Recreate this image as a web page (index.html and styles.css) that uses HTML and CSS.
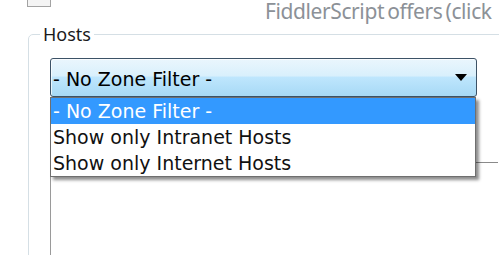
FILE: index.html
```html
<!DOCTYPE html>
<html lang="en">
<head>
    <meta charset="UTF-8">
    <title>Hosts</title>
    <link rel="stylesheet" href="styles.css">
</head>
<body>
    <div class="topbar">
        <div class="check"></div>
        <div class="hint">FiddlerScript offers (click</div>
    </div>
    <fieldset class="group">
        <legend>Hosts</legend>
        <div class="select">
            <div class="combo">
                <span>- No Zone Filter -</span>
                <svg class="arrow" width="12" height="7" viewBox="0 0 12 7"><path d="M0 0H12L6 7Z" fill="#000"/></svg>
            </div>
            <div class="popup">
                <div class="item selected">- No Zone Filter -</div>
                <div class="item">Show only Intranet Hosts</div>
                <div class="item">Show only Internet Hosts</div>
            </div>
        </div>
        <div class="panel"></div>
    </fieldset>
</body>
</html>
```
FILE: styles.css
```css
html, body {
    overflow: hidden;
}
body {
    margin: 0;
    width: 499px;
    height: 255px;
    background: #fff;
    font-family: "DejaVu Sans", sans-serif;
}
.topbar {
    display: flex;
    height: 24px;
    align-items: flex-start;
}
.check {
    flex: none;
    width: 22px;
    height: 20px;
    margin-top: -15px;
    margin-left: 27px;
    border: 1px solid #a3a3a3;
    background: #f4f4f4;
}
.hint {
    margin-left: 214px;
    margin-top: -3px;
    font-family: "Noto Sans", sans-serif;
    font-size: 21px;
    letter-spacing: -0.4px;
    word-spacing: -2px;
    color: #8c9197;
    white-space: nowrap;
}
.group {
    margin: 0 -60px 0 28px;
    padding: 0 0 0 21px;
    height: 300px;
    border: 1px solid #d5dfe5;
    border-radius: 5px;
}
.group legend {
    margin-left: -10px;
    padding: 0 3px;
    font-family: "Noto Sans", sans-serif;
    font-size: 18px;
    line-height: 20px;
    color: #1b1b1b;
}
.select {
    position: relative;
    width: 427px;
    margin-top: 14px;
}
.combo {
    display: flex;
    align-items: center;
    justify-content: space-between;
    height: 35px;
    padding: 2px 9px 0 2px;
    border: 1px solid #3c5266;
    border-radius: 3px;
    background: linear-gradient(#eaf6fd, #d9f0fc 45%, #bee6fd 50%, #a7d9f5);
    box-shadow: inset 1px 1px 0 rgba(255, 255, 255, 0.7);
    font-size: 19px;
    color: #000;
}
.combo .arrow {
    margin-top: -2px;
}
.popup {
    position: absolute;
    top: 100%;
    left: 0;
    width: 424px;
    border: 1px solid #6f6f6f;
    background: #fff;
    box-shadow: 3px 3px 3px rgba(0, 0, 0, 0.45);
}
.item {
    height: 26px;
    line-height: 26px;
    padding-left: 2px;
    font-size: 19px;
    color: #111;
    white-space: nowrap;
}
.item.selected {
    background: #3399ff;
    color: #fff;
}
.panel {
    margin-top: 65px;
    width: 447px;
    height: 120px;
    border-top: 1px solid #8a8a8a;
    border-left: 1px solid #9a9a9a;
}
```
